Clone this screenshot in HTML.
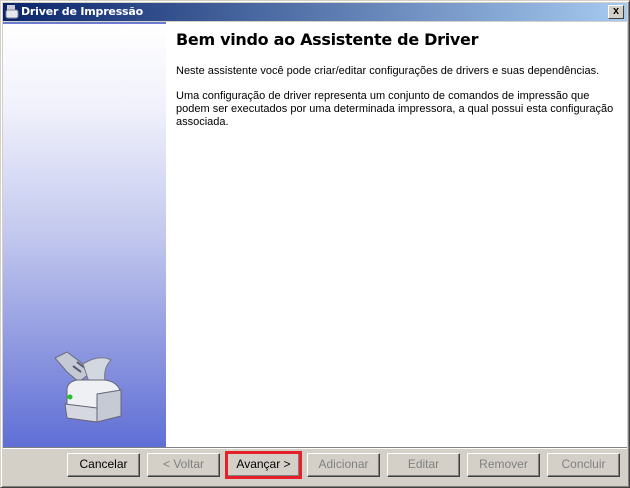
<!DOCTYPE html>
<html><head><meta charset="utf-8"><style>
*{margin:0;padding:0;box-sizing:border-box}
body{width:630px;height:488px;background:#d4d0c8;position:relative;overflow:hidden;font-family:"Liberation Sans",sans-serif;font-size:11px}
.win{position:absolute;left:0;top:0;width:630px;height:488px;border:1px solid #d4d0c8;border-right-color:#404040;border-bottom-color:#404040;box-shadow:inset 1px 1px 0 #fff,inset -1px -1px 0 #808080}
.title{position:absolute;left:3px;top:3px;width:624px;height:18px;background:linear-gradient(to right,#0a246a,#a6caf0)}
.title span{position:absolute;left:18px;top:2px;color:#fff;font-weight:bold;font-family:"DejaVu Sans",sans-serif;font-size:11px;letter-spacing:-0.2px}
.close{position:absolute;right:3px;top:2px;width:16px;height:14px;background:#d4d0c8;border:1px solid;border-color:#fff #404040 #404040 #fff;font:bold 11px "Liberation Sans",sans-serif;text-align:center;line-height:11px;color:#000}
.left{position:absolute;left:3px;top:22px;width:163px;height:425px;background:linear-gradient(to bottom,#ffffff 0%,#f0f1fb 20%,#c2c8ee 50%,#8792de 80%,#5f6fd6 100%);border-top:2px solid #6a7bd0}
.content{position:absolute;left:166px;top:22px;width:461px;height:425px;background:#fff}
h1{position:absolute;left:10px;top:8px;font:bold 16px "DejaVu Sans",sans-serif;color:#000;letter-spacing:-0.3px}
p{position:absolute;left:10px;line-height:13px;color:#000;width:455px}
.bar{position:absolute;left:3px;top:447px;width:624px;height:2px;border-top:1px solid #808080;border-bottom:1px solid #fff}
.btn{position:absolute;top:453px;width:73px;height:24px;background:#d4d0c8;border:1px solid;border-color:#fff #404040 #404040 #fff;box-shadow:inset -1px -1px 0 #808080;text-align:center;line-height:21px;font-size:12px;color:#000}
.dis{color:#808080}
.red{position:absolute;left:225px;top:451px;width:77px;height:28px;border:3px solid #e5202a}
</style></head><body>
<div class="win"></div>
<div class="title">
<svg style="position:absolute;left:2px;top:1px" width="14" height="16" viewBox="0 0 14 16"><rect x="2" y="1" width="8" height="5" fill="#ccd"/><rect x="1" y="6" width="12" height="8" rx="2" fill="#e8e8ee" stroke="#889" stroke-width="1"/></svg>
<span>Driver de Impressão</span>
<div class="close">x</div></div>
<div class="left">
<svg style="position:absolute;left:50px;top:326px" width="72" height="76" viewBox="0 0 72 76">
<path d="M2 8 L14 2 L30 14 L36 24 L26 32 L14 22 Z" fill="#c4c9d4" stroke="#6a6e80" stroke-width="1"/>
<path d="M20 16 L28 22 M24 12 L32 18" stroke="#556" stroke-width="2"/>
<path d="M30 14 Q46 4 58 10 Q50 18 52 32 L36 32 Z" fill="#d2d7e0" stroke="#778" stroke-width="1"/>
<path d="M14 40 Q14 32 24 30 L52 30 Q66 32 68 44 L68 66 L44 72 L14 66 Z" fill="#eef0f4" stroke="#667" stroke-width="1"/>
<path d="M12 54 L44 58 L44 72 L14 68 Z" fill="#d5d8e0" stroke="#667"/>
<path d="M44 44 L68 40 L68 66 L44 72 Z" fill="#c6cad4" stroke="#667"/>
<circle cx="17" cy="47" r="2.5" fill="#22c02a"/>
</svg></div>
<div class="content">
<h1>Bem vindo ao Assistente de Driver</h1>
<p style="top:43px">Neste assistente você pode criar/editar configurações de drivers e suas dependências.</p>
<p style="top:68px">Uma configuração de driver representa um conjunto de comandos de impressão que<br>podem ser executados por uma determinada impressora, a qual possui esta configuração<br>associada.</p>
</div>
<div class="bar"></div>
<div class="btn" style="left:67px">Cancelar</div>
<div class="btn dis" style="left:147px">&lt; Voltar</div>
<div class="btn" style="left:227px">Avançar &gt;</div>
<div class="btn dis" style="left:307px">Adicionar</div>
<div class="btn dis" style="left:387px">Editar</div>
<div class="btn dis" style="left:467px">Remover</div>
<div class="btn dis" style="left:547px">Concluir</div>
<div class="red"></div>
</body></html>
